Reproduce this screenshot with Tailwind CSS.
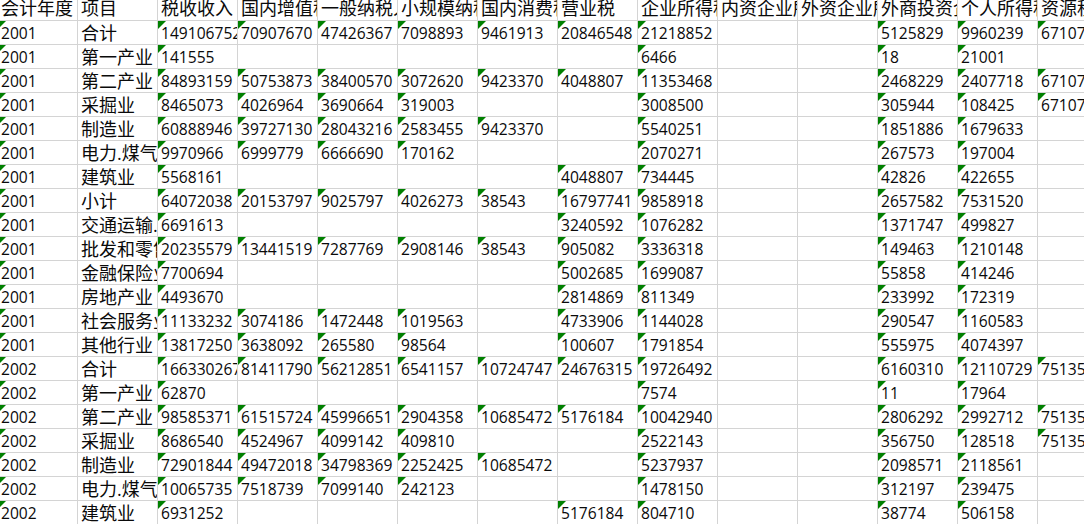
<!DOCTYPE html>
<html><head><meta charset="utf-8"><script src="https://cdn.jsdelivr.net/npm/@tailwindcss/browser@4"></script></head>
<body class="bg-white">
<main class="w-[1084px] h-[524px] overflow-hidden bg-white">
<table class="table-fixed w-[1120px] ml-[-2px] mt-[-3px] border-separate border-spacing-0 font-['Open_Sans','Noto_Sans_CJK_SC',sans-serif] text-[15.6px] leading-[22px] text-[#0a0a0a] [&_td]:relative [&_td]:w-[80px] [&_td]:h-[24px] [&_td]:p-0 [&_td]:pl-[3px] [&_td]:align-bottom [&_td]:overflow-hidden [&_td]:whitespace-nowrap [&_td]:border-r [&_td]:border-b [&_td]:border-[#d4d4d4] [&_td:nth-child(2)]:text-[18px] [&_tr:first-child_td]:text-[18px] [&_tr:first-child_td]:pb-[1px] [&_i]:absolute [&_i]:top-0 [&_i]:left-0 [&_i]:w-[8px] [&_i]:h-[8px] [&_i]:bg-[#008000] [&_i]:[clip-path:polygon(0_0,100%_0,0_100%)]">
<tbody>
<tr><td>会计年度</td><td>项目</td><td>税收收入</td><td>国内增值税</td><td>一般纳税人</td><td>小规模纳税人</td><td>国内消费税</td><td>营业税</td><td>企业所得税</td><td>内资企业所得税</td><td>外资企业所得税</td><td>外商投资企业所得税</td><td>个人所得税</td><td>资源税</td></tr>
<tr><td><i></i>2001</td><td>合计</td><td><i></i>149106752</td><td><i></i>70907670</td><td><i></i>47426367</td><td><i></i>7098893</td><td><i></i>9461913</td><td><i></i>20846548</td><td><i></i>21218852</td><td></td><td></td><td><i></i>5125829</td><td><i></i>9960239</td><td><i></i>671070</td></tr>
<tr><td><i></i>2001</td><td>第一产业</td><td><i></i>141555</td><td></td><td></td><td></td><td></td><td></td><td><i></i>6466</td><td></td><td></td><td><i></i>18</td><td><i></i>21001</td><td></td></tr>
<tr><td><i></i>2001</td><td>第二产业</td><td><i></i>84893159</td><td><i></i>50753873</td><td><i></i>38400570</td><td><i></i>3072620</td><td><i></i>9423370</td><td><i></i>4048807</td><td><i></i>11353468</td><td></td><td></td><td><i></i>2468229</td><td><i></i>2407718</td><td><i></i>671070</td></tr>
<tr><td><i></i>2001</td><td>采掘业</td><td><i></i>8465073</td><td><i></i>4026964</td><td><i></i>3690664</td><td><i></i>319003</td><td></td><td></td><td><i></i>3008500</td><td></td><td></td><td><i></i>305944</td><td><i></i>108425</td><td><i></i>671070</td></tr>
<tr><td><i></i>2001</td><td>制造业</td><td><i></i>60888946</td><td><i></i>39727130</td><td><i></i>28043216</td><td><i></i>2583455</td><td><i></i>9423370</td><td></td><td><i></i>5540251</td><td></td><td></td><td><i></i>1851886</td><td><i></i>1679633</td><td></td></tr>
<tr><td><i></i>2001</td><td>电力.煤气</td><td><i></i>9970966</td><td><i></i>6999779</td><td><i></i>6666690</td><td><i></i>170162</td><td></td><td></td><td><i></i>2070271</td><td></td><td></td><td><i></i>267573</td><td><i></i>197004</td><td></td></tr>
<tr><td><i></i>2001</td><td>建筑业</td><td><i></i>5568161</td><td></td><td></td><td></td><td></td><td><i></i>4048807</td><td><i></i>734445</td><td></td><td></td><td><i></i>42826</td><td><i></i>422655</td><td></td></tr>
<tr><td><i></i>2001</td><td>小计</td><td><i></i>64072038</td><td><i></i>20153797</td><td><i></i>9025797</td><td><i></i>4026273</td><td><i></i>38543</td><td><i></i>16797741</td><td><i></i>9858918</td><td></td><td></td><td><i></i>2657582</td><td><i></i>7531520</td><td></td></tr>
<tr><td><i></i>2001</td><td>交通运输.</td><td><i></i>6691613</td><td></td><td></td><td></td><td></td><td><i></i>3240592</td><td><i></i>1076282</td><td></td><td></td><td><i></i>1371747</td><td><i></i>499827</td><td></td></tr>
<tr><td><i></i>2001</td><td>批发和零售</td><td><i></i>20235579</td><td><i></i>13441519</td><td><i></i>7287769</td><td><i></i>2908146</td><td><i></i>38543</td><td><i></i>905082</td><td><i></i>3336318</td><td></td><td></td><td><i></i>149463</td><td><i></i>1210148</td><td></td></tr>
<tr><td><i></i>2001</td><td>金融保险业</td><td><i></i>7700694</td><td></td><td></td><td></td><td></td><td><i></i>5002685</td><td><i></i>1699087</td><td></td><td></td><td><i></i>55858</td><td><i></i>414246</td><td></td></tr>
<tr><td><i></i>2001</td><td>房地产业</td><td><i></i>4493670</td><td></td><td></td><td></td><td></td><td><i></i>2814869</td><td><i></i>811349</td><td></td><td></td><td><i></i>233992</td><td><i></i>172319</td><td></td></tr>
<tr><td><i></i>2001</td><td>社会服务业</td><td><i></i>11133232</td><td><i></i>3074186</td><td><i></i>1472448</td><td><i></i>1019563</td><td></td><td><i></i>4733906</td><td><i></i>1144028</td><td></td><td></td><td><i></i>290547</td><td><i></i>1160583</td><td></td></tr>
<tr><td><i></i>2001</td><td>其他行业</td><td><i></i>13817250</td><td><i></i>3638092</td><td><i></i>265580</td><td><i></i>98564</td><td></td><td><i></i>100607</td><td><i></i>1791854</td><td></td><td></td><td><i></i>555975</td><td><i></i>4074397</td><td></td></tr>
<tr><td><i></i>2002</td><td>合计</td><td><i></i>166330267</td><td><i></i>81411790</td><td><i></i>56212851</td><td><i></i>6541157</td><td><i></i>10724747</td><td><i></i>24676315</td><td><i></i>19726492</td><td></td><td></td><td><i></i>6160310</td><td><i></i>12110729</td><td><i></i>751350</td></tr>
<tr><td><i></i>2002</td><td>第一产业</td><td><i></i>62870</td><td></td><td></td><td></td><td></td><td></td><td><i></i>7574</td><td></td><td></td><td><i></i>11</td><td><i></i>17964</td><td></td></tr>
<tr><td><i></i>2002</td><td>第二产业</td><td><i></i>98585371</td><td><i></i>61515724</td><td><i></i>45996651</td><td><i></i>2904358</td><td><i></i>10685472</td><td><i></i>5176184</td><td><i></i>10042940</td><td></td><td></td><td><i></i>2806292</td><td><i></i>2992712</td><td><i></i>751350</td></tr>
<tr><td><i></i>2002</td><td>采掘业</td><td><i></i>8686540</td><td><i></i>4524967</td><td><i></i>4099142</td><td><i></i>409810</td><td></td><td></td><td><i></i>2522143</td><td></td><td></td><td><i></i>356750</td><td><i></i>128518</td><td><i></i>751350</td></tr>
<tr><td><i></i>2002</td><td>制造业</td><td><i></i>72901844</td><td><i></i>49472018</td><td><i></i>34798369</td><td><i></i>2252425</td><td><i></i>10685472</td><td></td><td><i></i>5237937</td><td></td><td></td><td><i></i>2098571</td><td><i></i>2118561</td><td></td></tr>
<tr><td><i></i>2002</td><td>电力.煤气</td><td><i></i>10065735</td><td><i></i>7518739</td><td><i></i>7099140</td><td><i></i>242123</td><td></td><td></td><td><i></i>1478150</td><td></td><td></td><td><i></i>312197</td><td><i></i>239475</td><td></td></tr>
<tr><td><i></i>2002</td><td>建筑业</td><td><i></i>6931252</td><td></td><td></td><td></td><td></td><td><i></i>5176184</td><td><i></i>804710</td><td></td><td></td><td><i></i>38774</td><td><i></i>506158</td><td></td></tr>
</tbody></table>
</main>
</body></html>
